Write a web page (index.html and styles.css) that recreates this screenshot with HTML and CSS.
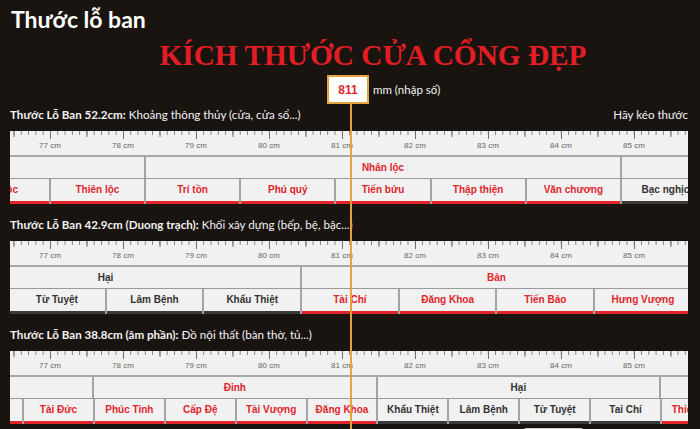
FILE: index.html
```html
<!DOCTYPE html>
<html lang="vi">
<head>
    <meta charset="UTF-8">
    <meta name="viewport" content="width=device-width, initial-scale=1.0">
    <title>Thước lỗ ban</title>
    <link rel="stylesheet" href="styles.css">
</head>
<body>
    <div class="page">
        <h1 class="title">Thước lỗ ban</h1>
        <h2 class="headline">KÍCH THƯỚC CỬA CỔNG ĐẸP</h2>

        <div class="input-row">
            <input class="mm-input" type="text" value="811">
            <span class="unit">mm (nhập số)</span>
        </div>

        <!-- thước 52.2cm -->
        <section class="block r52">
            <div class="caption">
                <p><b>Thước Lỗ Ban 52.2cm:</b> Khoảng thông thủy (cửa, cửa sổ...)</p>
                <span class="hint">Hãy kéo thước</span>
            </div>
            <div class="ruler">
                <div class="scale">
                    <span>77 cm</span><span>78 cm</span><span>79 cm</span><span>80 cm</span><span>81 cm</span>
                    <span>82 cm</span><span>83 cm</span><span>84 cm</span><span>85 cm</span>
                </div>
                <div class="row cung-row">
                    <div class="cell good">Thiên tài</div>
                    <div class="cell good">Nhân lộc</div>
                    <div class="cell bad">Cô độc</div>
                </div>
                <div class="row sub-row">
                    <div class="cell good">Tài lộc</div>
                    <div class="cell good">Thiên lộc</div>
                    <div class="cell good">Trí tồn</div>
                    <div class="cell good">Phú quý</div>
                    <div class="cell good">Tiến bửu</div>
                    <div class="cell good">Thập thiện</div>
                    <div class="cell good">Văn chương</div>
                    <div class="cell bad">Bạc nghịch</div>
                </div>
            </div>
        </section>

        <!-- thước 42.9cm -->
        <section class="block r429">
            <div class="caption">
                <p><b>Thước Lỗ Ban 42.9cm (Duong trạch):</b> Khối xây dựng (bếp, bệ, bậc...)</p>
            </div>
            <div class="ruler">
                <div class="scale">
                    <span>77 cm</span><span>78 cm</span><span>79 cm</span><span>80 cm</span><span>81 cm</span>
                    <span>82 cm</span><span>83 cm</span><span>84 cm</span><span>85 cm</span>
                </div>
                <div class="row cung-row">
                    <div class="cell bad">Hại</div>
                    <div class="cell good">Bản</div>
                </div>
                <div class="row sub-row">
                    <div class="cell bad">Từ Tuyệt</div>
                    <div class="cell bad">Lâm Bệnh</div>
                    <div class="cell bad">Khẩu Thiệt</div>
                    <div class="cell good">Tài Chí</div>
                    <div class="cell good">Đăng Khoa</div>
                    <div class="cell good">Tiến Bảo</div>
                    <div class="cell good">Hưng Vượng</div>
                </div>
            </div>
        </section>

        <!-- thước 38.8cm -->
        <section class="block r388">
            <div class="caption">
                <p><b>Thước Lỗ Ban 38.8cm (âm phần):</b> Đồ nội thất (bàn thờ, tủ...)</p>
            </div>
            <div class="ruler">
                <div class="scale">
                    <span>77 cm</span><span>78 cm</span><span>79 cm</span><span>80 cm</span><span>81 cm</span>
                    <span>82 cm</span><span>83 cm</span><span>84 cm</span><span>85 cm</span>
                </div>
                <div class="row cung-row">
                    <div class="cell good">Tài</div>
                    <div class="cell good">Đinh</div>
                    <div class="cell bad">Hại</div>
                    <div class="cell good">Vượng</div>
                </div>
                <div class="row sub-row">
                    <div class="cell good">Bảo Khố</div>
                    <div class="cell good">Tài Đức</div>
                    <div class="cell good">Phúc Tinh</div>
                    <div class="cell good">Cấp Đệ</div>
                    <div class="cell good">Tài Vượng</div>
                    <div class="cell good">Đăng Khoa</div>
                    <div class="cell bad">Khẩu Thiệt</div>
                    <div class="cell bad">Lâm Bệnh</div>
                    <div class="cell bad">Từ Tuyệt</div>
                    <div class="cell bad">Tai Chí</div>
                    <div class="cell good">Thiên Đức</div>
                </div>
            </div>
        </section>

        <div class="actions">
            <button class="btn" type="button">Xem</button>
        </div>

        <!-- kim chỉ vị trí đang đo -->
        <div class="pointer"></div>
    </div>
</body>
</html>
```

FILE: styles.css
```css
body {
    margin: 0;
    background-color: #1a1411;
    color: #f2f2f2;
    font-family: Lato, "Open Sans", sans-serif;
    overflow: hidden;
}
.page {
    position: relative;
    padding: 0 12px 0 10px;
}
.title {
    margin: 0;
    padding: 6px 0 0 1px;
    font-size: 23px;
    line-height: 26px;
    font-weight: 700;
    color: #fff;
}
.headline {
    margin: 6px 0 0;
    padding-left: 48px;
    text-align: center;
    font-family: "Liberation Serif", serif;
    font-size: 29.3px;
    line-height: 34px;
    font-weight: 700;
    color: #e31d24;
}
.input-row {
    display: flex;
    align-items: center;
    margin: 3px 0 0 317px;
}
.mm-input {
    box-sizing: border-box;
    width: 42px;
    height: 29px;
    padding: 0;
    border: 2px solid #e2a43c;
    background: #fff;
    text-align: center;
    font-family: "Liberation Sans", Arial, sans-serif;
    font-size: 12px;
    font-weight: 700;
    color: #e0252b;
}
.unit {
    margin-left: 4px;
    font-size: 11.5px;
}

/* mỗi khối thước */
.block {
    margin-bottom: 13px;
}
.block:first-of-type .caption {
    margin-top: 3px;
}
.caption {
    display: flex;
    justify-content: space-between;
    margin-bottom: 8px;
    font-size: 11.6px;
    line-height: 16px;
}
.caption p {
    margin: 0;
}
.ruler {
    background-color: #f1f1f1;
    overflow: hidden;
    font-family: "Liberation Sans", Arial, sans-serif;
}
.scale {
    display: flex;
    height: 24px;
    padding-left: 3.5px;
    border-bottom: 2px solid #a8a8a8;
    background-image:
        linear-gradient(90deg, #707070 1px, transparent 1px),
        linear-gradient(90deg, #707070 1px, transparent 1px),
        linear-gradient(90deg, #808080 1px, transparent 1px);
    background-size: 73px 8px, 73px 6px, 7.3px 4px;
    background-position: 40px 0, 76.5px 0, 3.5px 0;
    background-repeat: repeat-x;
}
.scale span {
    flex: none;
    width: 73px;
    padding-top: 10px;
    text-align: center;
    font-size: 8px;
    line-height: 10px;
    color: #666;
}
.row {
    display: flex;
}
.cell {
    flex: none;
    box-sizing: border-box;
    border-left: 2px solid #a3a3a3;
    text-align: center;
    font-size: 10px;
    font-weight: 700;
    white-space: nowrap;
    overflow: hidden;
}
.cell.good {
    color: #e0252b;
}
.cell.bad {
    color: #333;
}
.cung-row {
    height: 21px;
    border-bottom: 1px solid #9a9a9a;
}
.cung-row .cell {
    line-height: 22px;
}
.sub-row {
    height: 25px;
}
.sub-row .cell {
    height: 25px;
    padding-bottom: 3px;
    line-height: 22px;
}
.sub-row .cell.good {
    box-shadow: inset 0 -3px 0 #e3242b;
}
.sub-row .cell.bad {
    box-shadow: inset 0 -3px 0 #3a3a3a;
}

/* kích thước cung theo từng loại thước */
.r52 .cung-row .cell { width: 476px; }
.r52 .sub-row .cell { width: 95.2px; }
.r52 .cung-row { margin-left: -342px; }
.r52 .sub-row { margin-left: -56.4px; }

.r429 .cung-row .cell { width: 390.8px; }
.r429 .sub-row .cell { width: 97.7px; }
.r429 .cung-row { margin-left: -100.8px; }
.r429 .sub-row { margin-left: -3px; }

.r388 .cung-row .cell { width: 283.6px; }
.r388 .sub-row .cell { width: 70.9px; }
.r388 .cung-row { margin-left: -201.6px; }
.r388 .sub-row { margin-left: -58.9px; }

.actions {
    display: flex;
    margin: -9px 0 0 513px;
}
.btn {
    width: 61px;
    height: 24px;
    border: 1px solid #d0d0d0;
    border-radius: 3px;
    background: transparent;
    color: #eee;
    font-family: Lato, sans-serif;
    font-size: 12px;
}
.pointer {
    position: absolute;
    left: 350px;
    top: 104px;
    width: 2px;
    height: 400px;
    background-color: #e8a33c;
}
```
